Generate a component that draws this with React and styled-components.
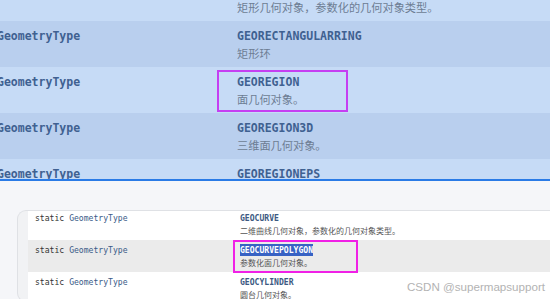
import React from "react";
import styled, { createGlobalStyle } from "styled-components";

const GlobalStyle = createGlobalStyle`
  html, body {
    margin: 0;
    padding: 0;
    width: 550px;
    height: 299px;
    overflow: hidden;
    background: #f5f6f9;
  }
`;

const Page = styled.div`
  position: relative;
  width: 550px;
  height: 299px;
  overflow: hidden;
`;

/* upper: zoomed doc table with blue theme */
const ZoomPanel = styled.div`
  height: 179px;
  overflow: hidden;
  background: #c6dbf6;
  border-bottom: 2px solid #2a7be6;
`;

const ZoomRows = styled.div`
  margin-top: -25px;
`;

const ZoomRow = styled.div`
  display: flex;
  height: 46px;
  padding-top: 7px;
  box-sizing: border-box;
  background: ${(p) => (p.$alt ? "#b9cfee" : "#c6dbf6")};
`;

const ZoomType = styled.div`
  width: 240px;
  margin-left: -3px;
  font-family: "DejaVu Sans Mono", monospace;
  font-weight: bold;
  font-size: 11.5px;
  line-height: 16px;
  color: #3f6191;
`;

const ZoomCell = styled.div`
  position: relative;
  flex: 1;
`;

const ZoomName = styled.div`
  font-family: "DejaVu Sans Mono", monospace;
  font-weight: bold;
  font-size: 11.5px;
  line-height: 16px;
  color: #3f6191;
  height: 16px;
`;

const ZoomDesc = styled.div`
  font-family: "Noto Sans CJK SC", sans-serif;
  font-size: 11.2px;
  line-height: 18px;
  color: #6d7d93;
`;

const Mark = styled.div`
  position: absolute;
  left: ${(p) => p.$left}px;
  top: ${(p) => p.$top}px;
  width: ${(p) => p.$w}px;
  height: ${(p) => p.$h}px;
  border: 2px solid ${(p) => p.$color};
  box-sizing: border-box;
  pointer-events: none;
`;

/* lower: original-size doc table */
const DocPanel = styled.div`
  padding: 29px 0 0 17px;
`;

const Card = styled.div`
  background: #f1f2f4;
  border: 1px solid #dfe1e5;
  border-right: none;
  border-radius: 9px 0 0 9px;
  padding-left: 10px;
  height: 90px;
  overflow: hidden;
`;

const Table = styled.div`
  background: #fff;
  margin-top: -3px;
`;

const DocRow = styled.div`
  display: flex;
  height: 32px;
  padding-top: 4px;
  box-sizing: border-box;
  background: ${(p) => (p.$alt ? "#ebebeb" : "#ffffff")};
`;

const DocType = styled.div`
  width: 212px;
  padding-left: 7px;
  box-sizing: border-box;
  font-family: "DejaVu Sans Mono", monospace;
  font-size: 8.1px;
  line-height: 12px;
  color: #333;

  span {
    color: #3b5b88;
  }
`;

const DocCell = styled.div`
  position: relative;
  flex: 1;
`;

const DocName = styled.div`
  font-family: "DejaVu Sans Mono", monospace;
  font-weight: bold;
  font-size: 8.1px;
  line-height: 12px;
  color: #3d5a82;
`;

const Selected = styled.span`
  background: #3762c4;
  color: #fff;
  padding: 1px 0;
`;

const DocDesc = styled.div`
  font-family: "Noto Sans CJK SC", sans-serif;
  font-size: 8px;
  line-height: 13px;
  color: #555;
`;

const Watermark = styled.div`
  position: absolute;
  right: 5px;
  bottom: 6px;
  font-family: "Liberation Sans", Arial, sans-serif;
  font-size: 11.6px;
  color: #b3b3b3;
`;

const zoomRows = [
  { name: "GEORECTANGLE", desc: "矩形几何对象，参数化的几何对象类型。" },
  { name: "GEORECTANGULARRING", desc: "矩形环" },
  { name: "GEOREGION", desc: "面几何对象。", marked: true },
  { name: "GEOREGION3D", desc: "三维面几何对象。" },
  { name: "GEOREGIONEPS", desc: "" },
];

const docRows = [
  { name: "GEOCURVE", desc: "二维曲线几何对象，参数化的几何对象类型。" },
  { name: "GEOCURVEPOLYGON", desc: "参数化面几何对象。", marked: true },
  { name: "GEOCYLINDER", desc: "圆台几何对象。" },
];

export default function App() {
  return (
    <Page>
      <GlobalStyle />
      <ZoomPanel>
        <ZoomRows>
          {zoomRows.map((r, i) => (
            <ZoomRow key={r.name} $alt={i % 2 === 1}>
              <ZoomType>GeometryType</ZoomType>
              <ZoomCell>
                <ZoomName>{r.name}</ZoomName>
                <ZoomDesc>{r.desc}</ZoomDesc>
                {r.marked && (
                  <Mark $left={-20} $top={-4} $w={131} $h={42} $color="#c53ff2" />
                )}
              </ZoomCell>
            </ZoomRow>
          ))}
        </ZoomRows>
      </ZoomPanel>

      <DocPanel>
        <Card>
          <Table>
            {docRows.map((r, i) => (
              <DocRow key={r.name} $alt={i % 2 === 1}>
                <DocType>
                  static <span>GeometryType</span>
                </DocType>
                <DocCell>
                  <DocName>
                    {r.marked ? <Selected>{r.name}</Selected> : r.name}
                  </DocName>
                  <DocDesc>{r.desc}</DocDesc>
                  {r.marked && (
                    <Mark $left={-7} $top={-4} $w={125} $h={33} $color="#f020e6" />
                  )}
                </DocCell>
              </DocRow>
            ))}
          </Table>
        </Card>
      </DocPanel>

      <Watermark>CSDN @supermapsupport</Watermark>
    </Page>
  );
}
